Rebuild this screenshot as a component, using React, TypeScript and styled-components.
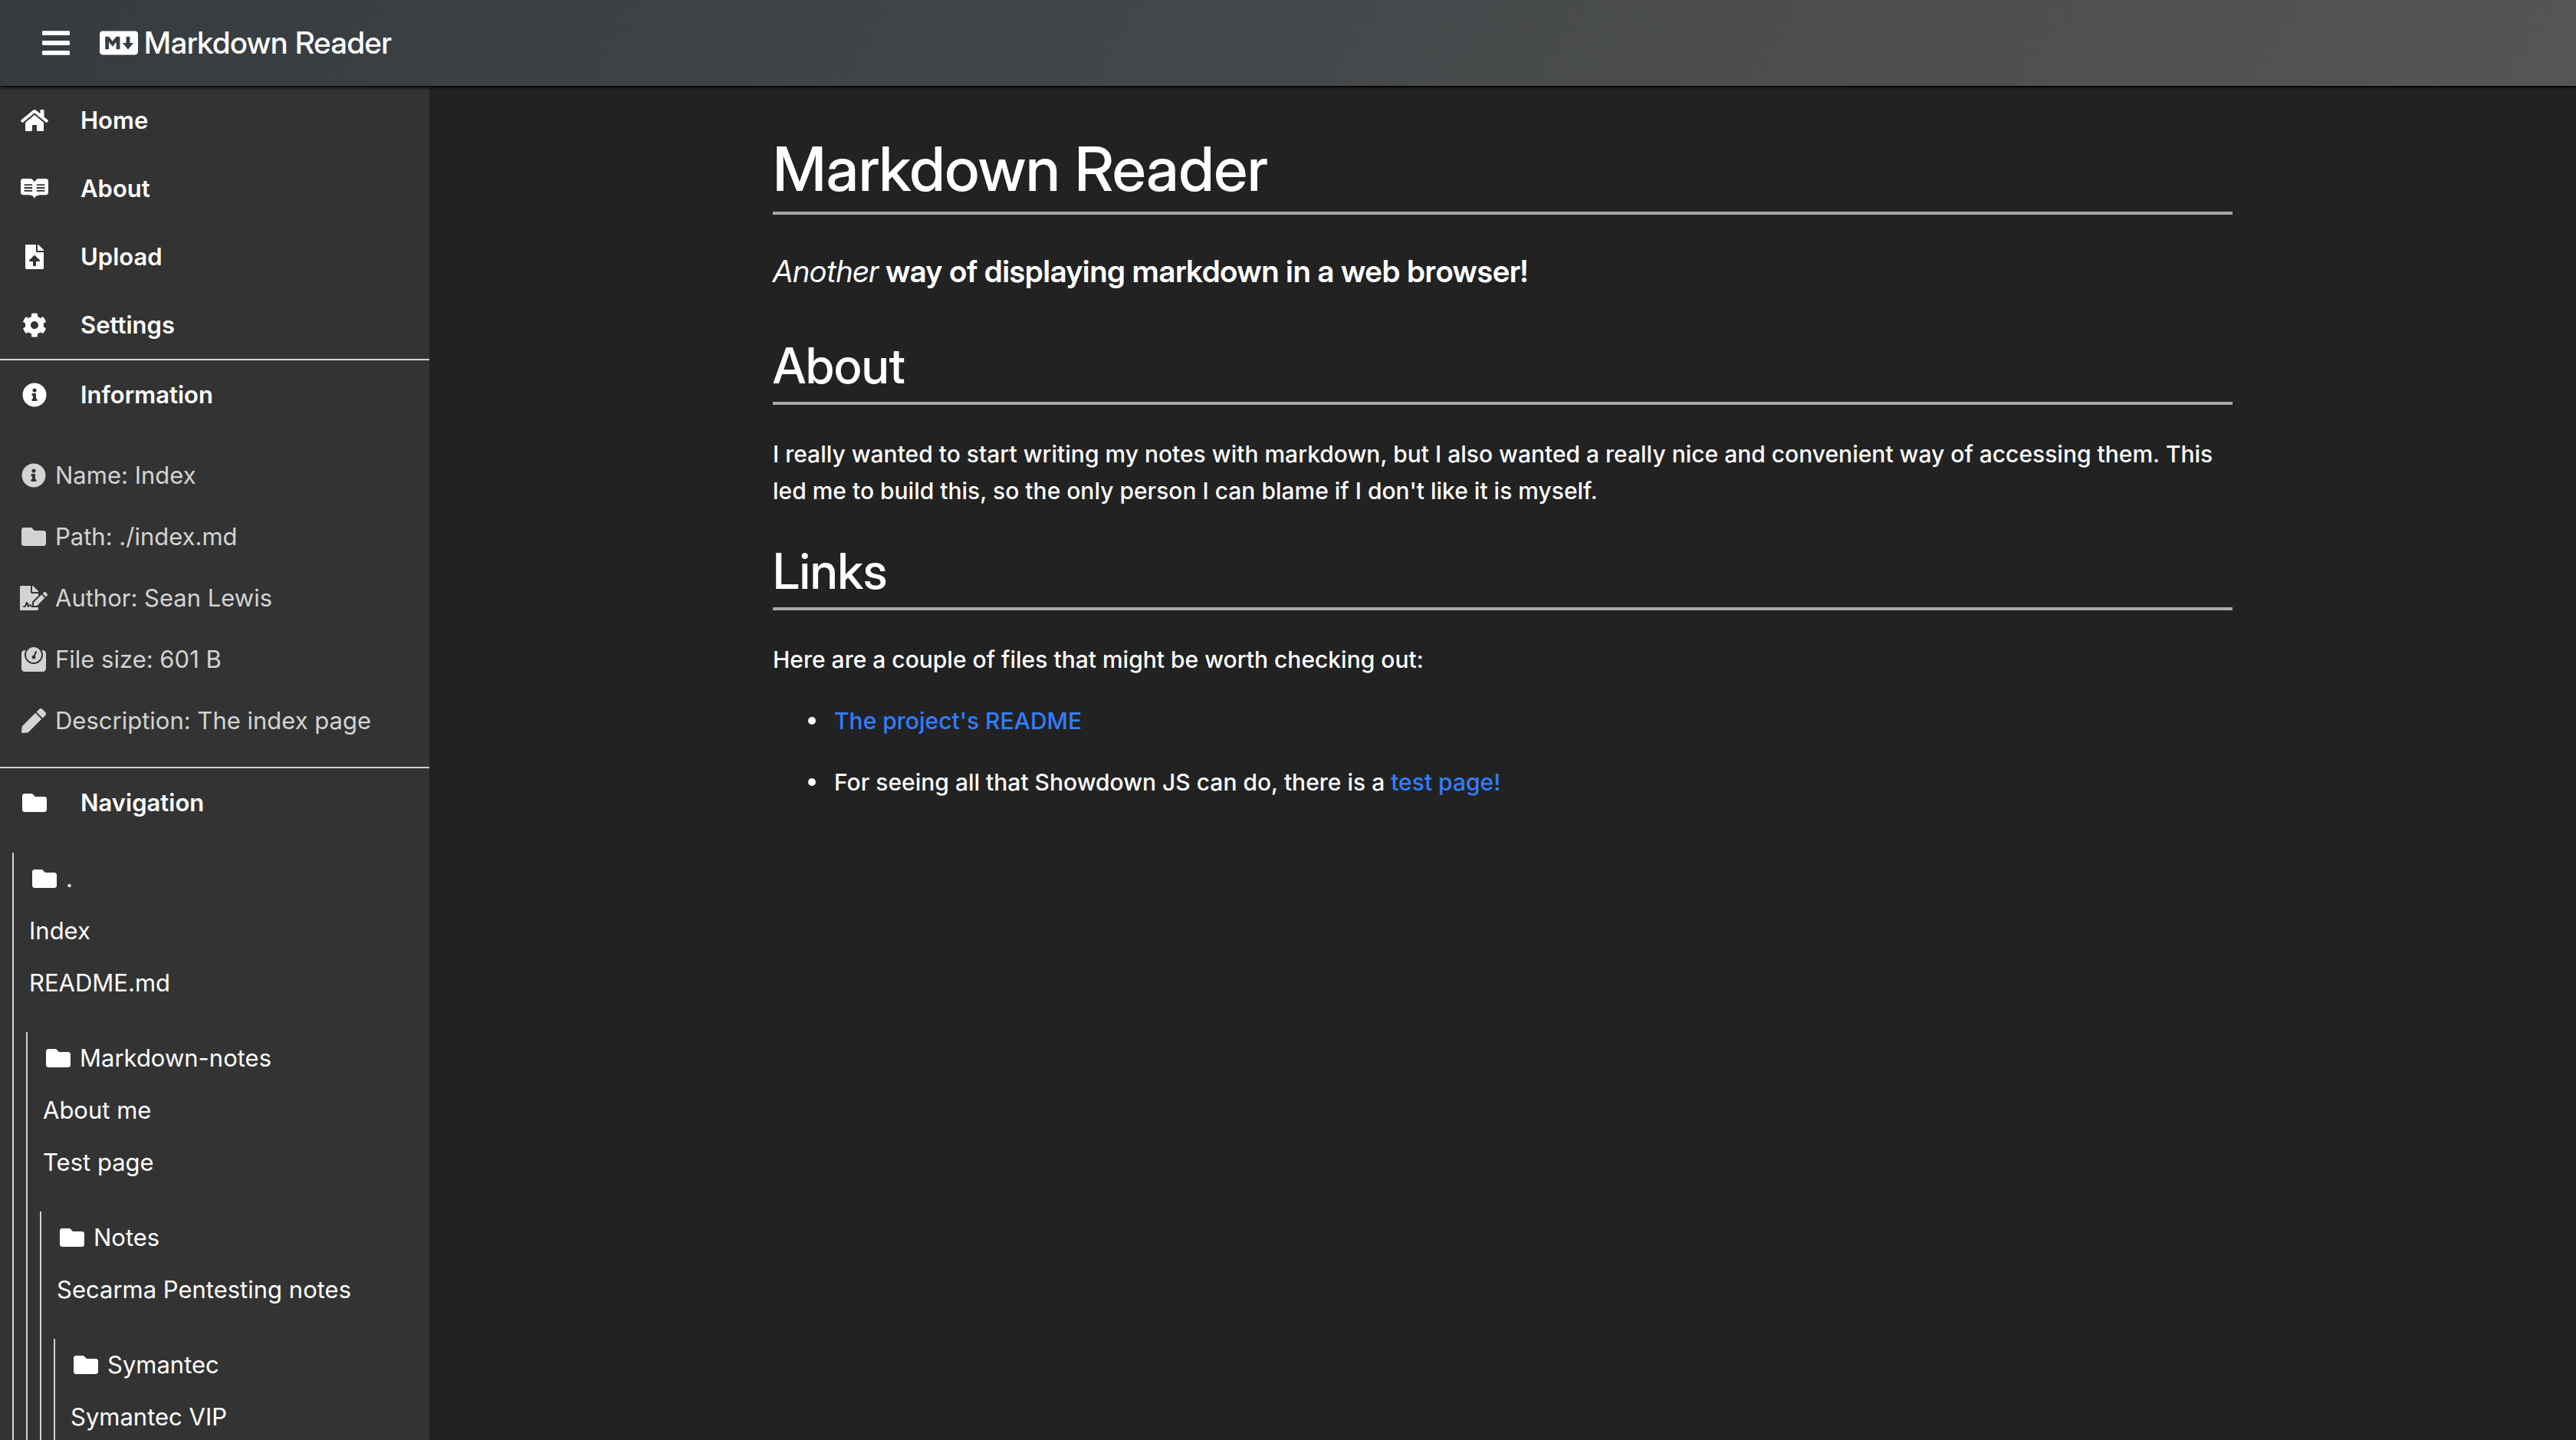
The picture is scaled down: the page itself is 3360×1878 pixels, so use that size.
import React from "react";
import styled, { createGlobalStyle } from "styled-components";
import type { IconType } from "react-icons";
import {
  FaBars,
  FaCog,
  FaFileSignature,
  FaFileUpload,
  FaFolder,
  FaHome,
  FaInfoCircle,
  FaMarkdown,
  FaPen,
  FaReadme,
  FaWeight,
} from "react-icons/fa";

const textFont = `Inter, "Liberation Sans", sans-serif`;
const displayFont = `"Inter Display", Inter, "Liberation Sans", sans-serif`;

const GlobalStyle = createGlobalStyle`
  *, *::before, *::after { box-sizing: border-box; }
  body {
    margin: 0;
    background: #222;
    color: #fff;
    font-family: ${textFont};
    font-size: 30px;
    font-weight: 500;
    line-height: 48px;
  }
`;

const Page = styled.div`
  display: flex;
  flex-direction: column;
  height: 100vh;
  overflow: hidden;
`;

const TopBar = styled.header`
  position: relative;
  z-index: 1;
  flex: none;
  display: flex;
  align-items: center;
  gap: 39px;
  height: 112px;
  padding: 0 55px;
  background: linear-gradient(120deg, #353b3f, #555);
  box-shadow: 0 2px 4px #000;
`;

const MenuButton = styled.button`
  display: flex;
  padding: 0;
  border: 0;
  background: none;
  color: inherit;
  cursor: pointer;

  svg {
    width: 36px;
    height: 42px;
  }
`;

const Brand = styled.a`
  display: flex;
  align-items: center;
  gap: 8px;
  color: inherit;
  font-family: ${displayFont};
  font-size: 40px;
  font-weight: 500;
  text-decoration: none;

  svg {
    width: 50px;
    height: 40px;
  }
`;

const Body = styled.div`
  flex: 1;
  display: flex;
  min-height: 0;
`;

const Sidebar = styled.nav`
  flex: none;
  width: 560px;
  overflow: hidden;
  background: #333;
  font-size: 31px;
  font-weight: 400;
`;

const Section = styled.section`
  & + & {
    border-top: 2px solid #d3d3d3;
  }
`;

const MenuLink = styled.a`
  display: flex;
  align-items: center;
  gap: 40px;
  height: 89px;
  padding: 0 25px;
  color: #fff;
  font-weight: 600;
  text-decoration: none;
`;

const IconBox = styled.span`
  flex: none;
  display: flex;

  svg {
    width: 40px;
    height: 32px;
  }
`;

const InfoList = styled.ul`
  margin: 0;
  padding: 21px 24px 20px;
  color: #d3d3d3;
  list-style: none;
`;

const InfoItem = styled.li`
  display: flex;
  align-items: center;
  gap: 8px;
  height: 80px;
  white-space: nowrap;
`;

const Tree = styled.div`
  margin: 30px 0 0 16px;
  border-left: 2px solid #d3d3d3;

  ${MenuLink} + & {
    margin-top: 21px;
  }
`;

const TreeFolder = styled.div`
  display: flex;
  align-items: center;
  gap: 8px;
  height: 68px;
  padding-left: 20px;
`;

const TreeLink = styled.a`
  display: flex;
  align-items: center;
  height: 68px;
  padding-left: 20px;
  color: #fff;
  text-decoration: none;
  white-space: nowrap;
`;

const Main = styled.main`
  flex: 1;
  overflow: hidden;
`;

const Article = styled.article`
  width: 68%;
  margin: 0 auto;
  padding-top: 60px;
`;

const Title = styled.h1`
  margin: 0;
  padding-bottom: 8px;
  border-bottom: 4px solid #a9a9a9;
  font-family: ${displayFont};
  font-size: 80px;
  line-height: 96px;
  font-weight: 500;
`;

const Tagline = styled.p`
  margin: 44px 0 54px;
  font-family: ${displayFont};
  font-size: 40px;
  line-height: 60px;
  font-weight: 600;

  em {
    font-weight: 400;
  }
`;

const Heading = styled.h2`
  margin: 42px 0 40px;
  padding-bottom: 8px;
  border-bottom: 4px solid #a9a9a9;
  font-family: ${displayFont};
  font-size: 64px;
  line-height: 78px;
  font-weight: 500;
`;

const Text = styled.p`
  margin: 0;
`;

const Bullets = styled.ul`
  display: grid;
  gap: 32px;
  margin: 32px 0 0;
  padding-left: 46px;
  list-style: none;
`;

const Bullet = styled.li`
  display: flex;
  align-items: center;
  gap: 24px;

  &::before {
    content: "";
    width: 10px;
    height: 10px;
    border-radius: 50%;
    background: currentColor;
  }
`;

const TextLink = styled.a`
  color: #337dff;
  text-decoration: none;
`;

const MENU: [IconType, string][] = [
  [FaHome, "Home"],
  [FaReadme, "About"],
  [FaFileUpload, "Upload"],
  [FaCog, "Settings"],
];

const INFO: [IconType, string, string][] = [
  [FaInfoCircle, "Name", "Index"],
  [FaFolder, "Path", "./index.md"],
  [FaFileSignature, "Author", "Sean Lewis"],
  [FaWeight, "File size", "601 B"],
  [FaPen, "Description", "The index page"],
];

interface Folder {
  name: string;
  files: string[];
  child?: Folder;
}

const ROOT: Folder = {
  name: ".",
  files: ["Index", "README.md"],
  child: {
    name: "Markdown-notes",
    files: ["About me", "Test page"],
    child: {
      name: "Notes",
      files: ["Secarma Pentesting notes"],
      child: { name: "Symantec", files: ["Symantec VIP"] },
    },
  },
};

function MenuRow({ icon: Icon, label }: { icon: IconType; label: string }) {
  return (
    <MenuLink href="#">
      <IconBox>
        <Icon />
      </IconBox>
      {label}
    </MenuLink>
  );
}

function FolderTree({ folder }: { folder: Folder }) {
  return (
    <Tree>
      <TreeFolder>
        <IconBox>
          <FaFolder />
        </IconBox>
        {folder.name}
      </TreeFolder>
      {folder.files.map((file) => (
        <TreeLink href="#" key={file}>
          {file}
        </TreeLink>
      ))}
      {folder.child && <FolderTree folder={folder.child} />}
    </Tree>
  );
}

export default function App() {
  return (
    <Page>
      <GlobalStyle />
      <TopBar>
        <MenuButton type="button" aria-label="Toggle menu">
          <FaBars />
        </MenuButton>
        <Brand href="#">
          <FaMarkdown />
          Markdown Reader
        </Brand>
      </TopBar>
      <Body>
        <Sidebar>
          <Section>
            {MENU.map(([icon, label]) => (
              <MenuRow key={label} icon={icon} label={label} />
            ))}
          </Section>
          <Section>
            <MenuRow icon={FaInfoCircle} label="Information" />
            <InfoList>
              {INFO.map(([Icon, label, value]) => (
                <InfoItem key={label}>
                  <IconBox>
                    <Icon />
                  </IconBox>
                  {`${label}: ${value}`}
                </InfoItem>
              ))}
            </InfoList>
          </Section>
          <Section>
            <MenuRow icon={FaFolder} label="Navigation" />
            <FolderTree folder={ROOT} />
          </Section>
        </Sidebar>
        <Main>
          <Article>
            <Title>Markdown Reader</Title>
            <Tagline>
              <em>Another</em> way of displaying markdown in a web browser!
            </Tagline>
            <Heading>About</Heading>
            <Text>
              I really wanted to start writing my notes with markdown, but I
              also wanted a really nice and convenient way of accessing them.
              This led me to build this, so the only person I can blame if I
              don't like it is myself.
            </Text>
            <Heading>Links</Heading>
            <Text>
              Here are a couple of files that might be worth checking out:
            </Text>
            <Bullets>
              <Bullet>
                <TextLink href="#">The project's README</TextLink>
              </Bullet>
              <Bullet>
                <span>
                  For seeing all that Showdown JS can do, there is a{" "}
                  <TextLink href="#">test page!</TextLink>
                </span>
              </Bullet>
            </Bullets>
          </Article>
        </Main>
      </Body>
    </Page>
  );
}
